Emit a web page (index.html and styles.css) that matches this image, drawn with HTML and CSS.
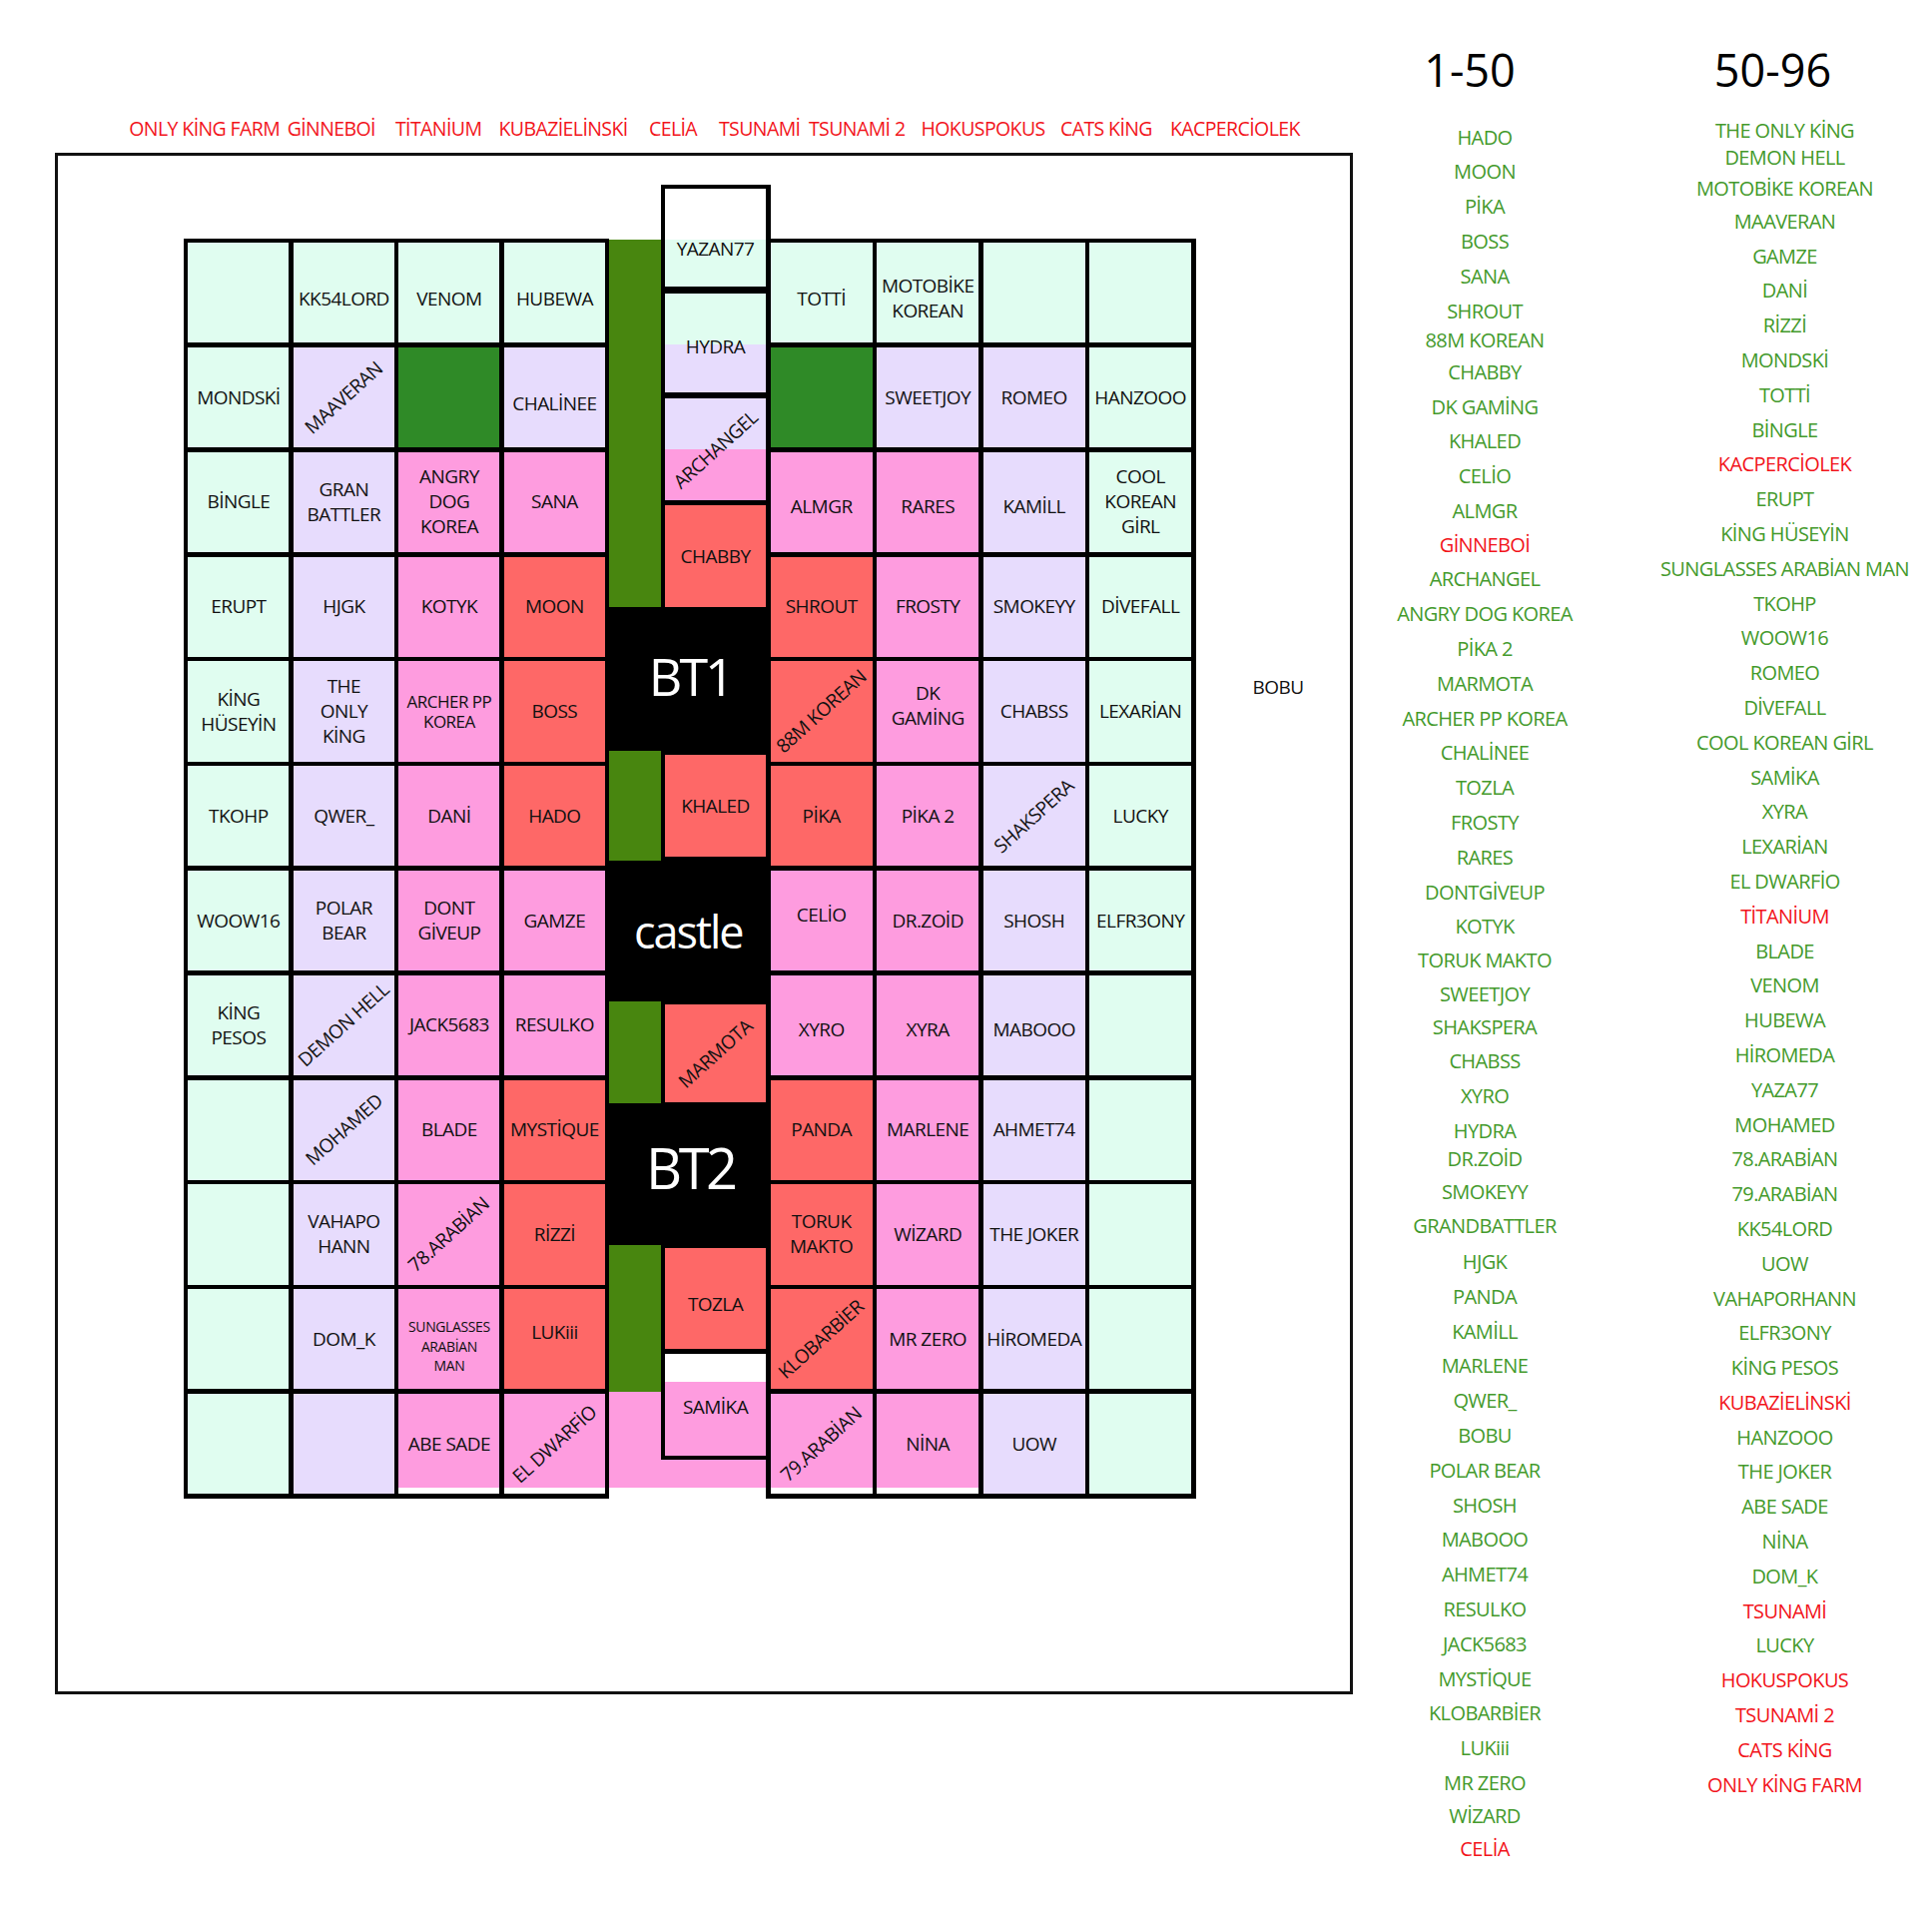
FILE: index.html
```html
<!DOCTYPE html>
<html lang="tr">
<head>
<meta charset="utf-8">
<title>Castle map</title>
<link rel="stylesheet" href="styles.css">
</head>
<body>
<div class="page">
  <div class="left">
    <div class="labels">
      <span class="w-okf">ONLY KİNG FARM</span>
      <span class="w-gin">GİNNEBOİ</span>
      <span class="w-tit">TİTANİUM</span>
      <span class="w-kub">KUBAZİELİNSKİ</span>
      <span class="w-cel">CELİA</span>
      <span class="w-tsu">TSUNAMİ</span>
      <span class="w-ts2">TSUNAMİ 2</span>
      <span class="w-hok">HOKUSPOKUS</span>
      <span class="w-cat">CATS KİNG</span>
      <span>KACPERCİOLEK</span>
    </div>
    <div class="frame">
      <div class="blk l">
        <div class="c mint"></div>
        <div class="c mint lo">KK54LORD</div>
        <div class="c mint lo">VENOM</div>
        <div class="c mint lo">HUBEWA</div>

        <div class="c mint">MONDSKİ</div>
        <div class="c lav"><span class="dg">MAAVERAN</span></div>
        <div class="c dk"></div>
        <div class="c lav lo">CHALİNEE</div>

        <div class="c mint">BİNGLE</div>
        <div class="c lav">GRAN<br>BATTLER</div>
        <div class="c pink">ANGRY<br>DOG<br>KOREA</div>
        <div class="c pink">SANA</div>

        <div class="c mint">ERUPT</div>
        <div class="c lav">HJGK</div>
        <div class="c pink">KOTYK</div>
        <div class="c red">MOON</div>

        <div class="c mint">KİNG<br>HÜSEYİN</div>
        <div class="c lav">THE<br>ONLY<br>KİNG</div>
        <div class="c pink md">ARCHER PP<br>KOREA</div>
        <div class="c red">BOSS</div>

        <div class="c mint">TKOHP</div>
        <div class="c lav">QWER_</div>
        <div class="c pink">DANİ</div>
        <div class="c red">HADO</div>

        <div class="c mint">WOOW16</div>
        <div class="c lav">POLAR<br>BEAR</div>
        <div class="c pink">DONT<br>GİVEUP</div>
        <div class="c pink">GAMZE</div>

        <div class="c mint">KİNG<br>PESOS</div>
        <div class="c lav"><span class="dg">DEMON HELL</span></div>
        <div class="c pink">JACK5683</div>
        <div class="c pink">RESULKO</div>

        <div class="c mint"></div>
        <div class="c lav"><span class="dg">MOHAMED</span></div>
        <div class="c pink">BLADE</div>
        <div class="c red">MYSTİQUE</div>

        <div class="c mint"></div>
        <div class="c lav">VAHAPO<br>HANN</div>
        <div class="c pink"><span class="dg">78.ARABİAN</span></div>
        <div class="c red">RİZZİ</div>

        <div class="c mint"></div>
        <div class="c lav">DOM_K</div>
        <div class="c pink sm">SUNGLASSES<br>ARABİAN<br>MAN</div>
        <div class="c red hi7">LUKiii</div>

        <div class="c mint"></div>
        <div class="c lav"></div>
        <div class="c pink cut">ABE SADE</div>
        <div class="c pink cut"><span class="dg">EL DWARFİO</span></div>
      </div>

      <div class="mid">
        <div class="band band-a">
          <div class="strip strip-a"></div>
          <div class="mcol">
            <div class="mc yazan">YAZAN77</div>
            <div class="mc hydra">HYDRA</div>
            <div class="mc arch"><span class="dg">ARCHANGEL</span></div>
            <div class="mc chabby">CHABBY</div>
          </div>
        </div>
        <div class="bt bt1">BT1</div>
        <div class="band band-b">
          <div class="strip green"></div>
          <div class="mc khaled">KHALED</div>
        </div>
        <div class="bt castle">castle</div>
        <div class="band band-c">
          <div class="strip green"></div>
          <div class="mc marmota"><span class="dg">MARMOTA</span></div>
        </div>
        <div class="bt bt2">BT2</div>
        <div class="band band-d">
          <div class="strip strip-d"></div>
          <div class="mcol">
            <div class="mc tozla">TOZLA</div>
            <div class="mc samika">SAMİKA</div>
          </div>
        </div>
        <div class="tail"></div>
      </div>

      <div class="blk r">
        <div class="c mint lo">TOTTİ</div>
        <div class="c mint lo">MOTOBİKE<br>KOREAN</div>
        <div class="c mint"></div>
        <div class="c mint"></div>

        <div class="c dk"></div>
        <div class="c lav">SWEETJOY</div>
        <div class="c lav">ROMEO</div>
        <div class="c mint">HANZOOO</div>

        <div class="c pink lo4">ALMGR</div>
        <div class="c pink lo4">RARES</div>
        <div class="c lav lo4">KAMİLL</div>
        <div class="c mint">COOL<br>KOREAN<br>GİRL</div>

        <div class="c red">SHROUT</div>
        <div class="c pink">FROSTY</div>
        <div class="c lav">SMOKEYY</div>
        <div class="c mint">DİVEFALL</div>

        <div class="c red"><span class="dg">88M KOREAN</span></div>
        <div class="c pink hi">DK<br>GAMİNG</div>
        <div class="c lav">CHABSS</div>
        <div class="c mint">LEXARİAN</div>

        <div class="c red">PİKA</div>
        <div class="c pink">PİKA 2</div>
        <div class="c lav"><span class="dg">SHAKSPERA</span></div>
        <div class="c mint">LUCKY</div>

        <div class="c pink hi">CELİO</div>
        <div class="c pink">DR.ZOİD</div>
        <div class="c lav">SHOSH</div>
        <div class="c mint">ELFR3ONY</div>

        <div class="c pink lo4">XYRO</div>
        <div class="c pink lo4">XYRA</div>
        <div class="c lav lo4">MABOOO</div>
        <div class="c mint"></div>

        <div class="c red">PANDA</div>
        <div class="c pink">MARLENE</div>
        <div class="c lav">AHMET74</div>
        <div class="c mint"></div>

        <div class="c red">TORUK<br>MAKTO</div>
        <div class="c pink">WİZARD</div>
        <div class="c lav">THE JOKER</div>
        <div class="c mint"></div>

        <div class="c red"><span class="dg">KLOBARBİER</span></div>
        <div class="c pink">MR ZERO</div>
        <div class="c lav">HİROMEDA</div>
        <div class="c mint"></div>

        <div class="c pink cut"><span class="dg">79.ARABİAN</span></div>
        <div class="c pink cut">NİNA</div>
        <div class="c lav">UOW</div>
        <div class="c mint"></div>
      </div>

      <div class="bobu">BOBU</div>
    </div>
  </div>

  <div class="lists">
    <div class="col col1">
      <div class="ttl">1-50</div>
      <div class="items">
        <div>HADO</div>
        <div>MOON</div>
        <div>PİKA</div>
        <div>BOSS</div>
        <div>SANA</div>
        <div>SHROUT</div>
        <div class="ta">88M KOREAN</div>
        <div class="tb">CHABBY</div>
        <div>DK GAMİNG</div>
        <div>KHALED</div>
        <div>CELİO</div>
        <div>ALMGR</div>
        <div class="r tc">GİNNEBOİ</div>
        <div>ARCHANGEL</div>
        <div>ANGRY DOG KOREA</div>
        <div>PİKA 2</div>
        <div>MARMOTA</div>
        <div>ARCHER PP KOREA</div>
        <div>CHALİNEE</div>
        <div>TOZLA</div>
        <div>FROSTY</div>
        <div>RARES</div>
        <div>DONTGİVEUP</div>
        <div>KOTYK</div>
        <div class="td">TORUK MAKTO</div>
        <div class="te">SWEETJOY</div>
        <div class="tf">SHAKSPERA</div>
        <div>CHABSS</div>
        <div>XYRO</div>
        <div>HYDRA</div>
        <div class="tg">DR.ZOİD</div>
        <div class="th">SMOKEYY</div>
        <div>GRANDBATTLER</div>
        <div class="ti">HJGK</div>
        <div>PANDA</div>
        <div>KAMİLL</div>
        <div>MARLENE</div>
        <div>QWER_</div>
        <div>BOBU</div>
        <div>POLAR BEAR</div>
        <div>SHOSH</div>
        <div>MABOOO</div>
        <div>AHMET74</div>
        <div>RESULKO</div>
        <div>JACK5683</div>
        <div>MYSTİQUE</div>
        <div>KLOBARBİER</div>
        <div>LUKiii</div>
        <div>MR ZERO</div>
        <div class="tj">WİZARD</div>
        <div class="r tk">CELİA</div>
      </div>
    </div>
    <div class="col col2">
      <div class="ttl">50-96</div>
      <div class="items">
        <div>THE ONLY KİNG</div>
        <div class="tl">DEMON HELL</div>
        <div class="tm">MOTOBİKE KOREAN</div>
        <div class="tn">MAAVERAN</div>
        <div>GAMZE</div>
        <div>DANİ</div>
        <div>RİZZİ</div>
        <div>MONDSKİ</div>
        <div>TOTTİ</div>
        <div>BİNGLE</div>
        <div class="r">KACPERCİOLEK</div>
        <div>ERUPT</div>
        <div>KİNG HÜSEYİN</div>
        <div>SUNGLASSES ARABİAN MAN</div>
        <div>TKOHP</div>
        <div>WOOW16</div>
        <div>ROMEO</div>
        <div>DİVEFALL</div>
        <div>COOL KOREAN GİRL</div>
        <div>SAMİKA</div>
        <div>XYRA</div>
        <div>LEXARİAN</div>
        <div>EL DWARFİO</div>
        <div class="r">TİTANİUM</div>
        <div>BLADE</div>
        <div>VENOM</div>
        <div>HUBEWA</div>
        <div>HİROMEDA</div>
        <div>YAZA77</div>
        <div>MOHAMED</div>
        <div>78.ARABİAN</div>
        <div>79.ARABİAN</div>
        <div>KK54LORD</div>
        <div>UOW</div>
        <div>VAHAPORHANN</div>
        <div>ELFR3ONY</div>
        <div>KİNG PESOS</div>
        <div class="r">KUBAZİELİNSKİ</div>
        <div>HANZOOO</div>
        <div>THE JOKER</div>
        <div>ABE SADE</div>
        <div>NİNA</div>
        <div>DOM_K</div>
        <div class="r">TSUNAMİ</div>
        <div>LUCKY</div>
        <div class="r">HOKUSPOKUS</div>
        <div class="r">TSUNAMİ 2</div>
        <div class="r">CATS KİNG</div>
        <div class="r">ONLY KİNG FARM</div>
      </div>
    </div>
  </div>
</div>
</body>
</html>
```

FILE: styles.css
```css
html, body {
  margin: 0;
  padding: 0;
  background: #ffffff;
}

body {
  font-family: "Open Sans", "Noto Sans", sans-serif;
  color: #111111;
}

.page {
  display: flex;
  align-items: flex-start;
  width: 1935px;
}

.left {
  flex: 0 0 auto;
  padding: 117px 0 0 55px;
}

/* red labels above the frame */
.labels {
  display: flex;
  height: 24px;
  line-height: 24px;
  margin: 0 0 12.3px 74.3px;
  font-size: 19.5px;
  letter-spacing: -0.6px;
  color: #f2141b;
  white-space: nowrap;
}

.labels span { flex: 0 0 auto; }
.w-okf { width: 158.4px; }
.w-gin { width: 108.3px; }
.w-tit { width: 103.5px; }
.w-kub { width: 150.5px; }
.w-cel { width: 70px; }
.w-tsu { width: 90px; }
.w-ts2 { width: 112.5px; }
.w-hok { width: 139.5px; }
.w-cat { width: 110px; }

/* outer frame */
.frame {
  box-sizing: border-box;
  width: 1300px;
  height: 1544px;
  border: 3.5px solid #111111;
  padding: 29.2px 0 0 126px;
  display: flex;
  align-items: flex-start;
}

/* 4 x 12 blocks */
.blk {
  flex: 0 0 auto;
  display: grid;
  background: #000000;
  padding: 4.4px;
  gap: 4.5px;
  grid-template-rows: repeat(12, 100.3px);
  margin-top: 53.3px;
}

.blk.l { grid-template-columns: repeat(4, 101px); }
.blk.r { grid-template-columns: repeat(4, 102px); margin-left: -5px; }

.c {
  display: flex;
  align-items: center;
  justify-content: center;
  text-align: center;
  font-size: 19px;
  line-height: 25px;
  letter-spacing: -0.55px;
  white-space: nowrap;
  box-sizing: border-box;
}

.mint { background: #e0fdf0; }
.lav  { background: #e7dcfd; }
.pink { background: #fe9cdf; }
.red  { background: #fe6867; }
.dk   { background: #2f8a27; }

.pink.cut { background: linear-gradient(#fe9cdf calc(100% - 6px), #ffffff 0); }

.lo  { padding-top: 12px; }
.lo4 { padding-top: 9px; }
.hi  { padding-bottom: 11px; }
.hi7 { padding-bottom: 14px; }

.md { font-size: 17px; line-height: 20px; letter-spacing: -0.5px; }
.sm { font-size: 14px; line-height: 19.5px; letter-spacing: -0.4px; padding-top: 14px; }

.dg {
  display: inline-block;
  transform: rotate(-42deg);
  white-space: nowrap;
}

/* centre column */
.mid {
  flex: 0 0 auto;
  width: 162px;
  display: flex;
  flex-direction: column;
}

.band {
  display: flex;
}

.strip {
  flex: 0 0 51.5px;
}

.green { background: #48860f; }
.strip-a { background: linear-gradient(#ffffff 55px, #48860f 55px); }
.strip-d { background: linear-gradient(#48860f 147px, #fe9cdf 147px); }

.mcol {
  flex: 0 0 110.5px;
  display: flex;
  flex-direction: column;
}

.mc {
  box-sizing: border-box;
  width: 110.5px;
  flex: 0 0 auto;
  display: flex;
  align-items: center;
  justify-content: center;
  text-align: center;
  font-size: 19px;
  line-height: 25px;
  letter-spacing: -0.55px;
  white-space: nowrap;
  border-left: 4px solid #000000;
  border-right: 5px solid #000000;
}

.band-a { height: 423px; }
.yazan {
  height: 109px;
  border-top: 4px solid #000000;
  border-bottom: 7px solid #000000;
  background: linear-gradient(#ffffff 51px, #e0fdf0 51px);
  padding-top: 22px;
}
.hydra {
  height: 105px;
  border-bottom: 6px solid #000000;
  background: linear-gradient(#e0fdf0 51px, #e7dcfd 51px);
  padding-top: 7px;
}
.arch {
  height: 107px;
  border-bottom: 5px solid #000000;
  background: linear-gradient(#e7dcfd 51px, #fe9cdf 51px);
}
.chabby {
  height: 102px;
  background: #fe6867;
}

.bt {
  background: #000000;
  color: #ffffff;
  display: flex;
  align-items: center;
  justify-content: center;
  box-sizing: border-box;
}

.bt1 {
  height: 144px;
  font-size: 52px;
  letter-spacing: -3px;
  padding: 0 0 8px 0;
}

.band-b { height: 110px; }
.khaled {
  height: 110px;
  border-top: 4px solid #000000;
  border-bottom: 4px solid #000000;
  background: #fe6867;
}

.castle {
  height: 141px;
  font-size: 45px;
  letter-spacing: -2px;
  padding: 0 4px 0 0;
}

.band-c { height: 102px; }
.marmota {
  height: 102px;
  border-top: 3px solid #000000;
  border-bottom: 1px solid #000000;
  background: #fe6867;
}

.bt2 {
  height: 142px;
  font-size: 56px;
  letter-spacing: -3.5px;
  padding: 0 0 14px 0;
}

.band-d { height: 215px; }
.tozla {
  height: 109px;
  border-top: 3px solid #000000;
  border-bottom: 5px solid #000000;
  background: #fe6867;
  padding-top: 11px;
}
.samika {
  height: 106px;
  border-bottom: 4px solid #000000;
  background: linear-gradient(#ffffff 28px, #fe9cdf 28px);
  padding-top: 4px;
}

.tail {
  height: 28px;
  background: #fe9cdf;
}

.bobu {
  flex: 0 0 auto;
  margin: 491px 0 0 57px;
  font-size: 19px;
  line-height: 24px;
  letter-spacing: -0.55px;
}

/* lists on the right */
.lists {
  display: flex;
  margin-left: 22px;
}

.col { flex: 0 0 auto; }
.col1 { width: 220px; }
.col2 { width: 290px; margin-left: 45.5px; }

.ttl {
  height: 56px;
  margin-top: 41.5px;
  font-size: 45px;
  line-height: 56px;
  text-align: center;
  color: #000000;
}
.col1 .ttl { padding-right: 30px; }
.col2 .ttl { padding-right: 24px; }

.items {
  text-align: center;
  font-size: 20px;
  line-height: 34.8px;
  letter-spacing: -0.6px;
  color: #449a2c;
  white-space: nowrap;
}
.col1 .items { margin-top: 23.1px; }
.col2 .items { margin-top: 16px; }

.items .r { color: #f2141b; }

.ta { margin-top: -5.8px; }
.tb { margin-top: -2.6px; }
.tc { margin-top: -1.2px; }
.td { margin-top: -0.9px; }
.te { margin-top: -1.4px; }
.tf { margin-top: -1.9px; }
.tg { margin-top: -7.2px; }
.th { margin-top: -1.8px; }
.ti { margin-top: 0.9px; }
.tj { margin-top: -1.5px; }
.tk { margin-top: -2.2px; }
.tl { margin-top: -7.3px; }
.tm { margin-top: -3.8px; }
.tn { margin-top: -2px; }
```
